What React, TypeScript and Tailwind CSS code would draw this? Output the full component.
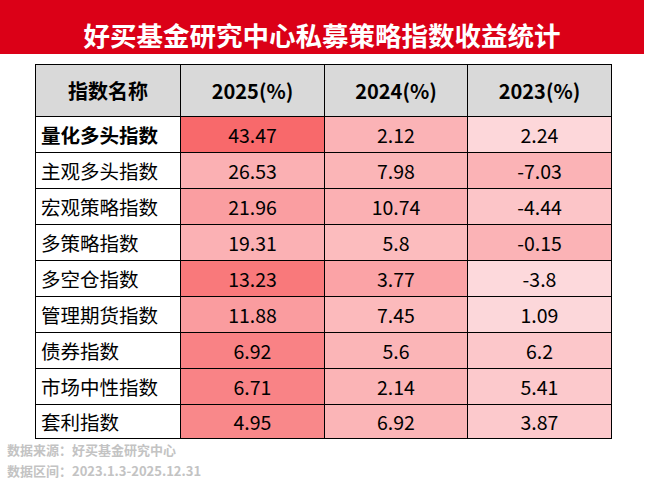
import React from 'react';

const rows = [
  { name: '量化多头指数', bold: true, v: ['43.47', '2.12', '2.24'], c: ['bg-[#f8696b]', 'bg-[#fbb3b6]', 'bg-[#fdd7da]'] },
  { name: '主观多头指数', v: ['26.53', '7.98', '-7.03'], c: ['bg-[#fbb0b3]', 'bg-[#fbb5b7]', 'bg-[#fbb3b6]'] },
  { name: '宏观策略指数', v: ['21.96', '10.74', '-4.44'], c: ['bg-[#fa9ea1]', 'bg-[#fbb0b3]', 'bg-[#fcc5c8]'] },
  { name: '多策略指数', v: ['19.31', '5.8', '-0.15'], c: ['bg-[#fbb1b4]', 'bg-[#fcbcbe]', 'bg-[#fbb3b6]'] },
  { name: '多空仓指数', v: ['13.23', '3.77', '-3.8'], c: ['bg-[#f9797b]', 'bg-[#fba3a6]', 'bg-[#fdd9dc]'] },
  { name: '管理期货指数', v: ['11.88', '7.45', '1.09'], c: ['bg-[#fa9c9f]', 'bg-[#fcbabc]', 'bg-[#fcd7da]'] },
  { name: '债券指数', v: ['6.92', '5.6', '6.2'], c: ['bg-[#f98285]', 'bg-[#fbb5b7]', 'bg-[#fcc7ca]'] },
  { name: '市场中性指数', v: ['6.71', '2.14', '5.41'], c: ['bg-[#f98386]', 'bg-[#fbb4b6]', 'bg-[#fcc9cc]'] },
  { name: '套利指数', v: ['4.95', '6.92', '3.87'], c: ['bg-[#f9888a]', 'bg-[#fbb5b7]', 'bg-[#fcc9cc]'] },
];

const font = { fontFamily: '"Noto Sans CJK SC", "Noto Sans", sans-serif' };

export default function App() {
  return (
    <div className="w-[646px] h-[483px] bg-white flex flex-col overflow-hidden" style={font}>
      {/* Title bar */}
      <div className="w-[644px] h-[54px] bg-[#db0017] flex justify-center pt-[21px]">
        <div className="text-white text-[26.5px] leading-[27px] font-bold">好买基金研究中心私募策略指数收益统计</div>
      </div>

      {/* Table */}
      <div className="mt-[10px] ml-[35px]">
        <table className="border-collapse border-[1.5px] border-black text-black">
          <thead>
            <tr className="bg-[#d9d9d9] h-[52px]">
              <th className="w-[145px] border border-black text-[20px] font-bold text-center">指数名称</th>
              <th className="w-[144px] border border-black text-[20px] font-bold text-center">2025(%)</th>
              <th className="w-[143px] border border-black text-[20px] font-bold text-center">2024(%)</th>
              <th className="w-[144px] border border-black text-[20px] font-bold text-center">2023(%)</th>
            </tr>
          </thead>
          <tbody>
            {rows.map((r, i) => (
              <tr key={r.name} className={i === rows.length - 1 ? 'h-[34px]' : 'h-[36px]'}>
                <td className={`border border-black pl-[5px] text-[19.5px] leading-none ${r.bold ? 'font-bold' : ''}`}>{r.name}</td>
                {r.v.map((v, j) => (
                  <td key={j} className={`border border-black text-center text-[19.5px] leading-none ${r.c[j]}`}>{v}</td>
                ))}
              </tr>
            ))}
          </tbody>
        </table>
      </div>

      {/* Footer */}
      <div className="ml-[7px] mt-0 text-[13px] leading-[21px] font-bold text-[#c3c3c3]">
        <div>数据来源：好买基金研究中心</div>
        <div>数据区间：2023.1.3-2025.12.31</div>
      </div>
    </div>
  );
}
